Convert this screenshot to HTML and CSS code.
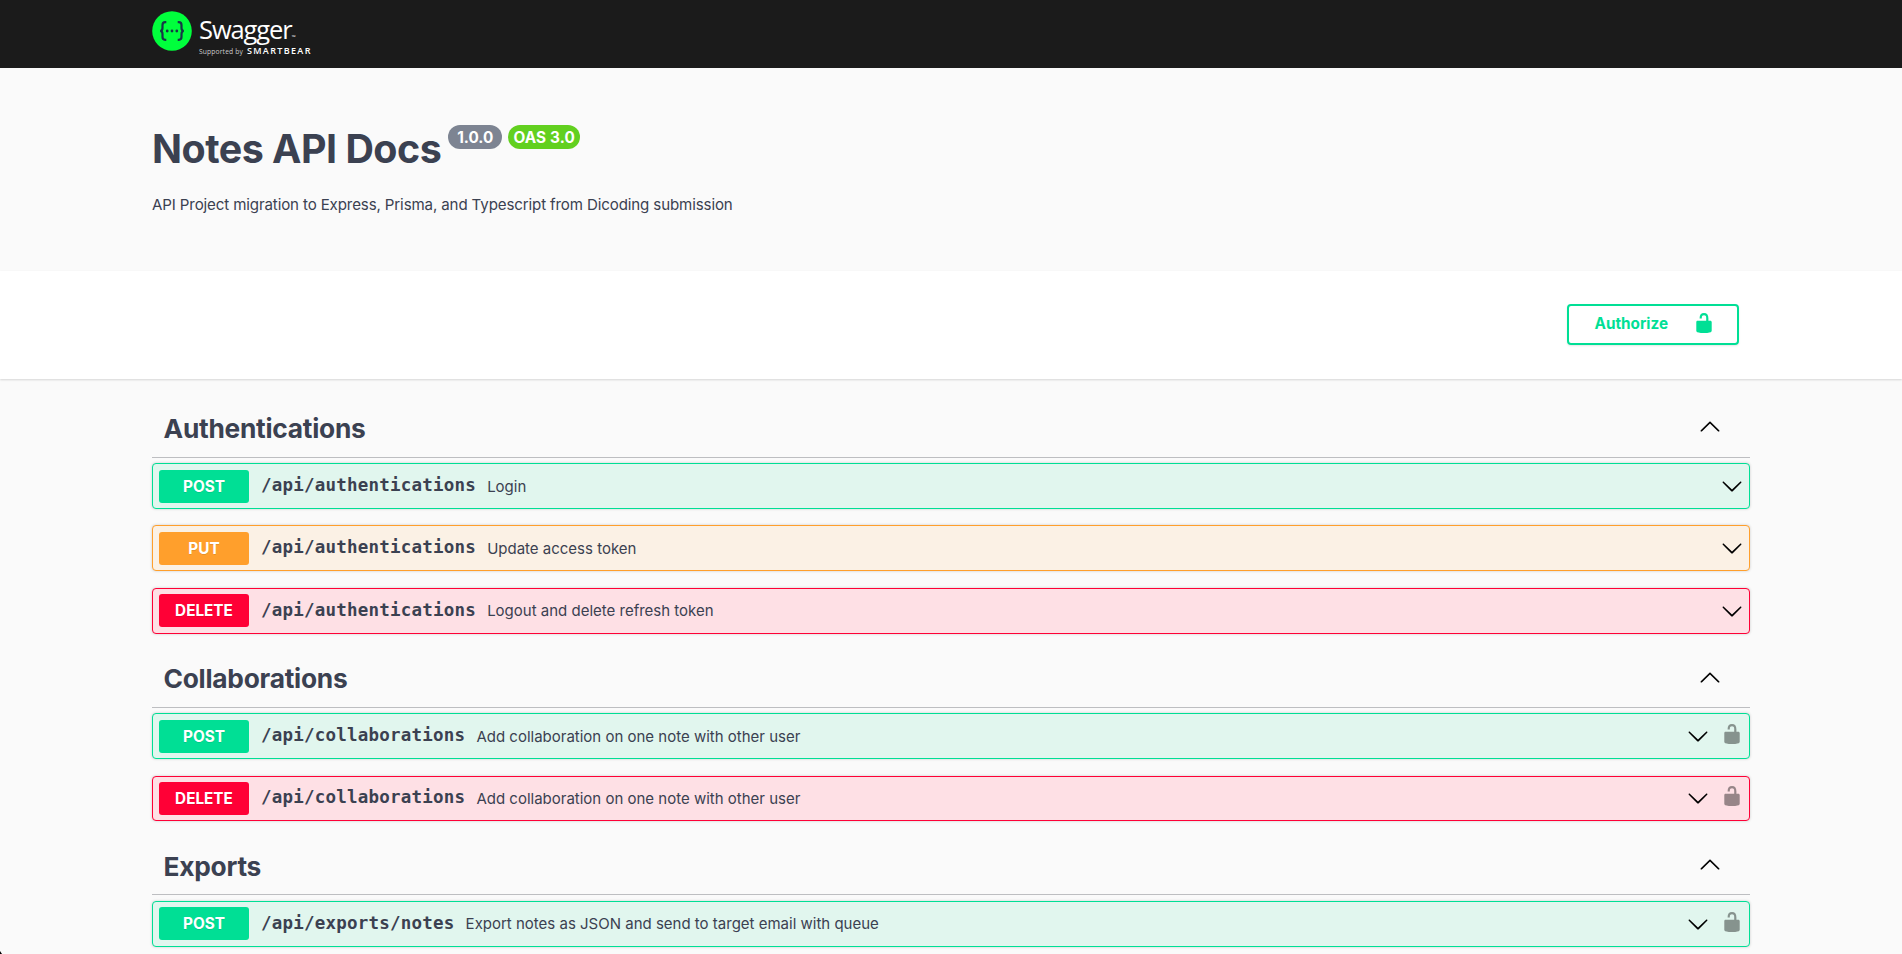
FILE: index.html
```html
<!DOCTYPE html>
<html lang="en">
<head>
<meta charset="utf-8">
<title>Notes API Docs</title>
<link rel="stylesheet" href="styles.css">
</head>
<body>
<svg class="defs" aria-hidden="true">
  <symbol id="up" viewBox="0 0 20 20"><path d="M17.418 14.908c.272.268.709.268.979 0s.271-.701 0-.969l-7.908-7.83c-.27-.268-.707-.268-.979 0l-7.908 7.83c-.27.268-.27.701 0 .969s.709.268.979 0L10 7.767z"/></symbol>
  <symbol id="down" viewBox="0 0 20 20"><path d="M17.418 6.109c.272-.268.709-.268.979 0s.271.701 0 .969l-7.908 7.83c-.27.268-.707.268-.979 0l-7.908-7.83c-.27-.268-.27-.701 0-.969s.709-.268.979 0L10 13.25z"/></symbol>
  <symbol id="unlocked" viewBox="0 0 20 20"><path d="M15.8 8H14V5.6C14 2.703 12.665 1 10 1 7.334 1 6 2.703 6 5.6V6h2v-.801C8 3.754 8.797 3 10 3c1.203 0 2 .754 2 2.199V8H4c-.553 0-1 .646-1 1.199V17c0 .549.428 1.139.951 1.307l1.197.387C5.672 18.861 6.55 19 7.1 19h5.8c.549 0 1.428-.139 1.951-.307l1.196-.387c.524-.167.953-.757.953-1.306V9.199C17 8.646 16.352 8 15.8 8z"/></symbol>
</svg>
<header class="topbar">
  <div class="wrapper brand">
    <svg class="mark" viewBox="0 0 40 40">
      <circle cx="20" cy="20" r="19.8" fill="#00ff3c"/>
      <g fill="none" stroke="#173647" stroke-width="2.2">
        <path d="M14.3 11.2h-1.200q-2.600 0-2.600 2.700v3.200q0 2.900-2.400 2.900 2.400 0 2.400 2.900v3.200q0 2.700 2.600 2.700h1.200"/>
        <path d="M25.700 11.200h1.200q2.600 0 2.600 2.700v3.200q0 2.900 2.400 2.900-2.400 0-2.400 2.900v3.200q0 2.700-2.600 2.700h-1.200"/>
      </g>
      <g fill="#173647"><circle cx="15.200" cy="20" r="1.400"/><circle cx="20" cy="20" r="1.400"/><circle cx="24.800" cy="20" r="1.400"/></g>
    </svg>
    <div class="words">
      <div class="swagger">Swagger<span class="tm">™</span></div>
      <div class="support"><span class="by">Supported by</span><span class="bear">SMARTBEAR</span></div>
    </div>
  </div>
</header>
<section class="info">
  <div class="wrapper">
    <div class="title-row"><h1>Notes API Docs</h1><span class="pill version">1.0.0</span><span class="pill oas">OAS 3.0</span></div>
    <p class="description">API Project migration to Express, Prisma, and Typescript from Dicoding submission</p>
  </div>
</section>
<section class="schemes">
  <div class="wrapper auth-row">
    <button class="authorize"><span>Authorize</span><svg class="icon"><use href="#unlocked"/></svg></button>
  </div>
</section>
<main class="wrapper">
  <section>
    <h2 class="tag"><span>Authentications</span><svg class="icon"><use href="#up"/></svg></h2>
    <div class="op post"><span class="method">POST</span><span class="path">/api/authentications</span><span class="summary">Login</span><svg class="icon"><use href="#down"/></svg></div>
    <div class="op put"><span class="method">PUT</span><span class="path">/api/authentications</span><span class="summary">Update access token</span><svg class="icon"><use href="#down"/></svg></div>
    <div class="op delete"><span class="method">DELETE</span><span class="path">/api/authentications</span><span class="summary">Logout and delete refresh token</span><svg class="icon"><use href="#down"/></svg></div>
  </section>
  <section>
    <h2 class="tag"><span>Collaborations</span><svg class="icon"><use href="#up"/></svg></h2>
    <div class="op post"><span class="method">POST</span><span class="path">/api/collaborations</span><span class="summary">Add collaboration on one note with other user</span><svg class="icon"><use href="#down"/></svg><svg class="icon lock"><use href="#unlocked"/></svg></div>
    <div class="op delete"><span class="method">DELETE</span><span class="path">/api/collaborations</span><span class="summary">Add collaboration on one note with other user</span><svg class="icon"><use href="#down"/></svg><svg class="icon lock"><use href="#unlocked"/></svg></div>
  </section>
  <section>
    <h2 class="tag"><span>Exports</span><svg class="icon"><use href="#up"/></svg></h2>
    <div class="op post"><span class="method">POST</span><span class="path">/api/exports/notes</span><span class="summary">Export notes as JSON and send to target email with queue</span><svg class="icon"><use href="#down"/></svg><svg class="icon lock"><use href="#unlocked"/></svg></div>
  </section>
</main>
<div class="corner"></div>
</body>
</html>
```
FILE: styles.css
```css
* { box-sizing: border-box; }
html, body { height: 100%; overflow: hidden; }
body { margin: 0; background: #fafafa; color: #3b4151; font-family: Inter, sans-serif; font-size: 15.3px; }
.defs { display: none; }
.wrapper { width: 1598px; margin: 0 auto; }
.icon { width: 22px; height: 22px; flex: none; display: block; }

.topbar { height: 68px; background: #1b1b1b; color: #fff; }
.brand { display: flex; padding-top: 10.5px; }
.mark { width: 40px; height: 40px; flex: none; }
.words { padding-left: 7px; font-family: "Open Sans", sans-serif; white-space: nowrap; }
.swagger { height: 36px; font-size: 25.500px; line-height: 36px; letter-spacing: -1.100px; font-weight: 400; }
.tm { font-size: 5px; letter-spacing: 0; }
.support { display: flex; align-items: baseline; gap: 4px; line-height: 9px; margin-top: -1px; }
.by { font-size: 6.700px; line-height: 9px; letter-spacing: .15px; color: #ccc; }
.bear { font-size: 9px; line-height: 9px; font-weight: 600; letter-spacing: 1.350px; }

.info { height: 203px; padding-top: 57px; }
.title-row { display: flex; align-items: flex-start; }
h1 { margin: 0; padding-top: 1px; height: 47px; font-size: 39.4px; line-height: 47px; font-weight: 700; letter-spacing: -.5px; white-space: nowrap; }
.pill { height: 24px; border-radius: 12px; color: #fff; font-weight: 700; line-height: 25px; text-align: center; }
.version { width: 54px; margin-left: 7px; background: #7d8492; }
.oas { width: 72px; margin-left: 6px; background: #62d01f; letter-spacing: .15px; }
.description { margin: 23px 0 0; font-size: 15.1px; letter-spacing: -.130px; line-height: 20px; }

.schemes { height: 108px; background: #fff; box-shadow: 0 1px 2px rgba(0,0,0,.15); padding-top: 33px; }
.auth-row { display: flex; justify-content: flex-end; padding-right: 11px; }
.authorize { width: 172px; height: 41px; display: flex; align-items: center; justify-content: space-between; padding: 0 22.500px 2px 25.500px; border: 2px solid #00df95; border-radius: 4px; background: transparent; color: #00df95; font: 700 15.3px Inter, sans-serif; box-shadow: 0 1px 2px rgba(0,0,0,.1); }
.authorize .icon { fill: #00df95; margin-bottom: 1px; }

main { padding-top: 21.200px; }
.tag { display: flex; align-items: center; justify-content: space-between; height: 57.500px; margin: 0 0 5.400px; padding: 0 29.500px 0 11.500px; border-bottom: 1px solid #bdbec1; font-size: 26.3px; font-weight: 700; letter-spacing: -.25px; }
.tag .icon { margin-bottom: 4px; }
.op { display: flex; align-items: center; height: 45.900px; margin-bottom: 16.500px; padding: 0 6px; border: 1px solid; border-radius: 4px; box-shadow: 0 0 3px rgba(0,0,0,.19); }
.method { width: 90px; height: 33px; border-radius: 3px; color: #fff; font-weight: 700; line-height: 33px; text-align: center; text-shadow: 0 1px 0 rgba(0,0,0,.1); }
.path { margin-left: 12px; font-family: "DejaVu Sans Mono", monospace; font-size: 17.500px; line-height: 21px; letter-spacing: .220px; font-weight: 700; padding-bottom: 1px; }
.summary { flex: 1; margin-left: 11px; font-size: 15px; }
.lock { margin-left: 12px; fill: #000; opacity: .4; position: relative; top: -2px; }
.post { border-color: #00df95; background: #e1f6ee; }
.post .method { background: #00df95; }
.put { border-color: #ff9f2c; background: #fbf1e5; }
.put .method { background: #ff9f2c; }
.delete { border-color: #ff0036; background: #fee0e5; }
.delete .method { background: #ff0036; }
.corner { position: fixed; left: 0; bottom: 0; width: 2px; height: 3px; background: #000; clip-path: polygon(0 0, 0 100%, 100% 100%); }
```
